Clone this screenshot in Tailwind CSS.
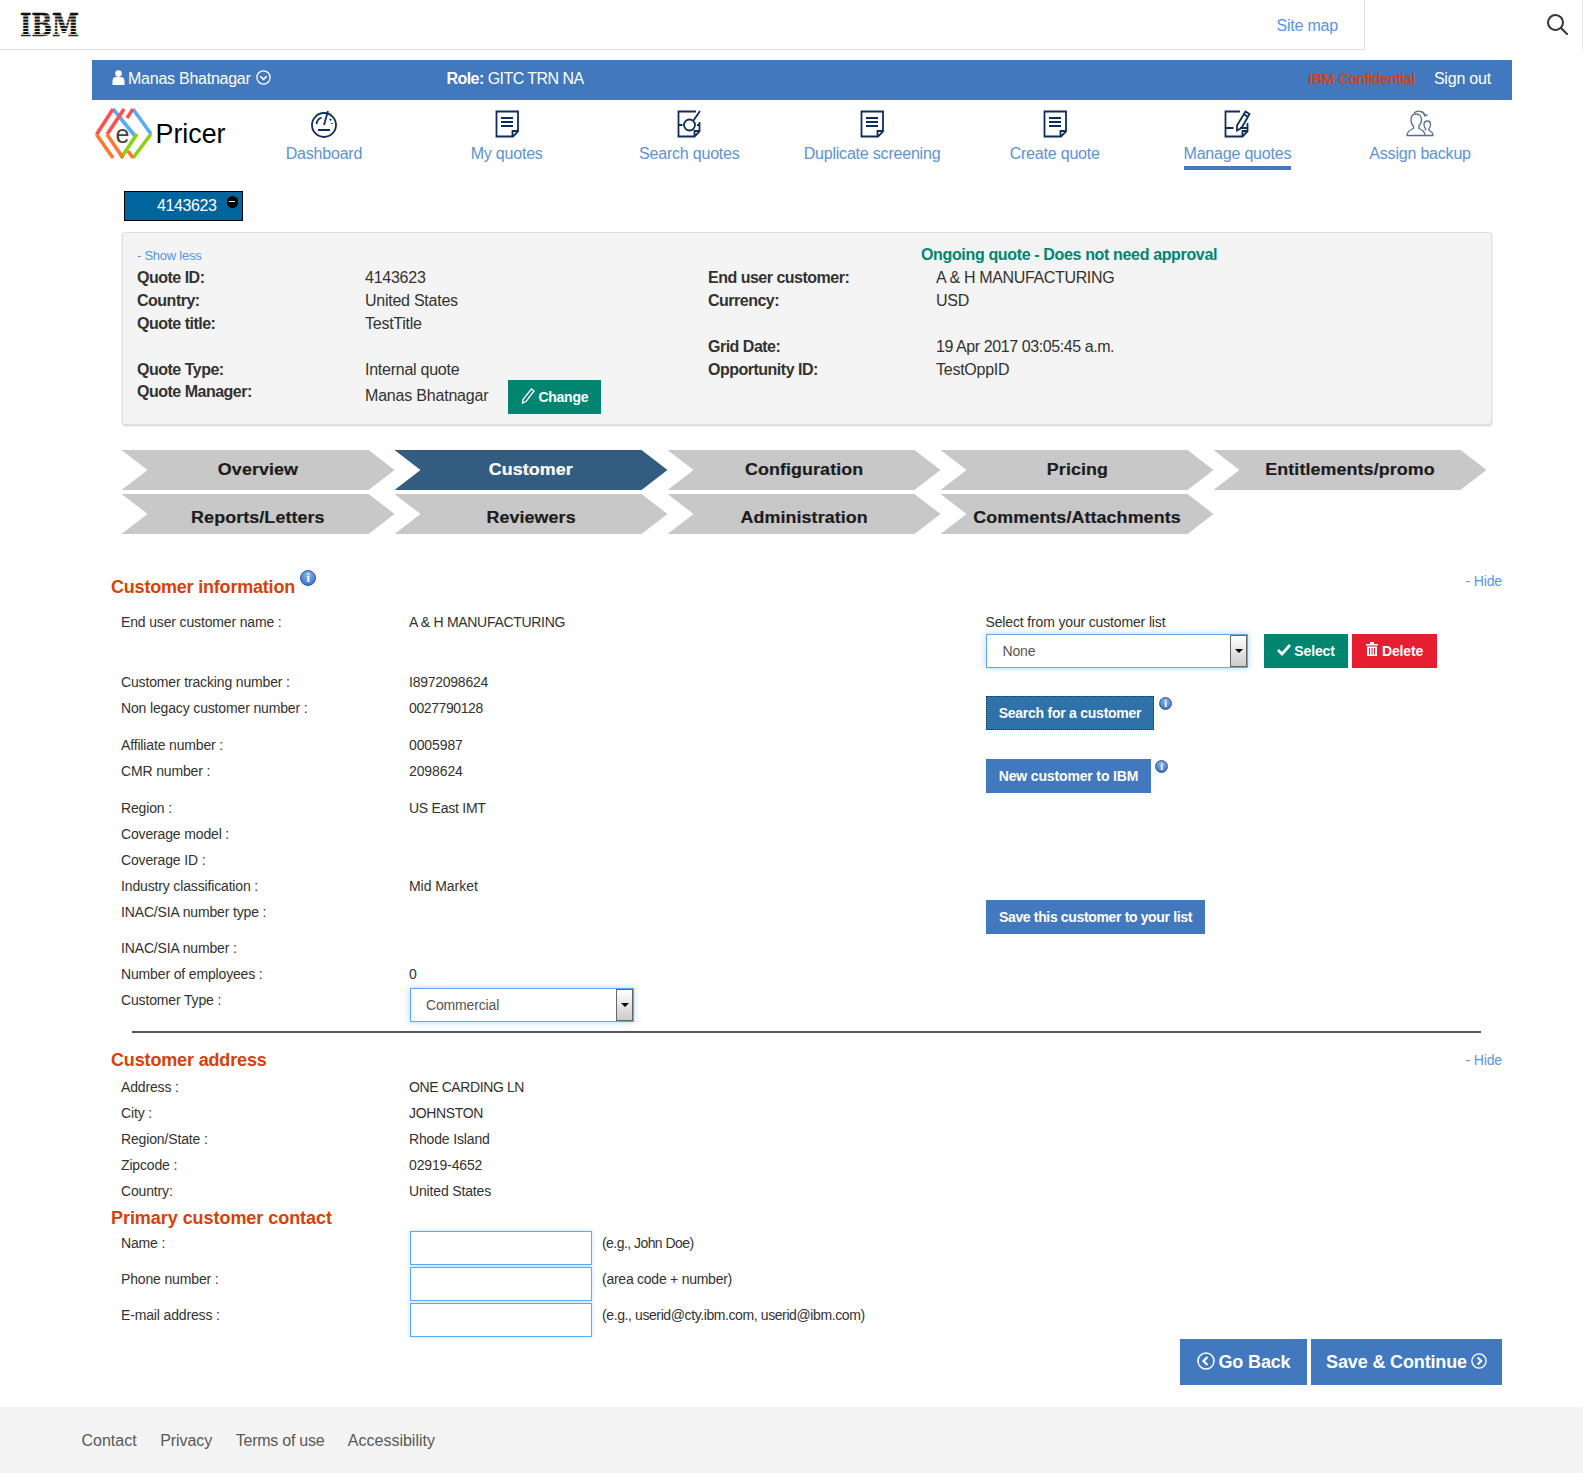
<!DOCTYPE html>
<html lang="en">
<head>
  <meta charset="UTF-8">
  <title>ePricer - Customer</title>
  <script src="https://cdn.jsdelivr.net/npm/@tailwindcss/browser@4"></script>
</head>
<body class="bg-white font-['Liberation_Sans',sans-serif] text-[#323232] w-[1583px] overflow-x-hidden">

  <!-- Top header -->
  <header class="flex h-[50px]">
    <div class="w-[1365px] h-[50px] border-r border-b border-[#e0e0e0] flex items-center justify-between pl-[20px] pr-[26px]">
      <svg class="w-[60px] h-[30px] overflow-visible" viewBox="0 0 60 30">
        <text x="0" y="20" font-family="DejaVu Serif" font-weight="700" font-size="24" textLength="59" lengthAdjust="spacingAndGlyphs" transform="scale(1 1.3)" fill="#111" stroke="#111" stroke-width="0.5">IBM</text>
        <path d="M0 6h60M0 9.100h60M0 12.200h60M0 15.300h60M0 18.400h60M0 21.500h60M0 24.600h60" stroke="#fff" stroke-width="0.9"/>
      </svg>
      <a class="text-[16px] text-[#5596e6] tracking-[-0.2px] mt-[3px]">Site map</a>
    </div>
    <div class="flex-1 flex justify-end items-start border-r border-[#e8e8e8]">
      <svg class="w-[22px] h-[22px] mt-[13px] mr-[14px]" viewBox="0 0 22 22" fill="none" stroke="#333" stroke-width="2"><circle cx="9.500" cy="9.500" r="7.500"/><path d="M15 15l6 6" stroke-linecap="round"/></svg>
    </div>
  </header>

  <!-- User bar -->
  <div class="ml-[92px] mt-[10px] w-[1420px] h-[40px] pb-[2px] bg-[#4178be] text-white text-[16px] flex items-center tracking-[-0.2px]">
    <div class="w-[354.500px] pl-[20px] flex items-center">
      <svg class="w-[13px] h-[15px] mr-[3px] -mt-[4px]" viewBox="0 0 13 15" fill="#fff"><circle cx="6.500" cy="3.600" r="3.300"/><path d="M0.500 15V10.500C0.500 8 2.500 7 4 7h5c1.500 0 3.500 1 3.500 3.500V15z"/></svg>
      <span class="tracking-[-0.25px]">Manas Bhatnagar</span>
      <svg class="w-[15px] h-[15px] ml-[5px] -mt-[4px]" viewBox="0 0 15 15" fill="none" stroke="#fff" stroke-width="1.300"><circle cx="7.500" cy="7.500" r="6.600"/><path d="M4.300 6.200l3.200 3.200 3.200-3.200" stroke-width="1.600"/></svg>
    </div>
    <div class="flex-1 tracking-[-0.55px]"><b>Role:</b> GITC TRN NA</div>
    <span class="text-[15px] text-[#d74108] [-webkit-text-stroke:0.4px_#d74108]">IBM Confidential</span>
    <a class="ml-[19px] mr-[21px]">Sign out</a>
  </div>

  <!-- Logo and navigation -->
  <nav class="ml-[90px] h-[91px] flex items-start">
    <svg class="w-[150px] h-[64px] mt-[4px] shrink-0" viewBox="0 0 150 64" fill="none" stroke-width="3.600">
      <path d="M23 5L45 32M43 5L61 30" stroke="#5aaafa"/>
      <path d="M61 30L43 54M47 30L31 54" stroke="#8cd211"/>
      <path d="M23 5L6.500 30.500M34 5L17 30.500M43 5L37 14" stroke="#ff5050"/>
      <path d="M6.500 30.500L23 54M17 30.500L33 54M38 47L43 54" stroke="#ff7832"/>
      <text x="25.500" y="39" font-size="25" stroke="none" fill="#444">e</text>
      <text x="65.500" y="39" font-size="28.500" stroke="none" fill="#000" textLength="70" lengthAdjust="spacingAndGlyphs">Pricer</text>
    </svg>
    <div class="ml-[-7.400px] grid grid-cols-[repeat(7,182.700px)] text-[16px] text-[#5a93d8] text-center tracking-[-0.2px]">
      <a class="flex flex-col items-center pt-[10px]">
        <svg class="w-[28px] h-[28px]" viewBox="0 0 28 28" fill="none" stroke="#0f2d5c" stroke-width="1.800"><circle cx="14" cy="15" r="12"/><path d="M14 15L18 1M8 20h12M6.500 14a8 8 0 0 1 5-6.500M20 9l1 1.500M22 13v1" /></svg>
        <span class="mt-[6px] leading-[20px]">Dashboard</span>
      </a>
      <a class="flex flex-col items-center pt-[10px]">
        <svg class="w-[28px] h-[28px]" viewBox="0 0 28 28" fill="none" stroke="#0f2d5c" stroke-width="1.800"><path d="M3.500 1.500h21.500v20l-5 5H3.500zM25 21h-5.500v5.500M8 8h12M8 12h12M8 16h12"/></svg>
        <span class="mt-[6px] leading-[20px]">My quotes</span>
      </a>
      <a class="flex flex-col items-center pt-[10px]">
        <svg class="w-[28px] h-[28px]" viewBox="0 0 28 28" fill="none" stroke="#0f2d5c" stroke-width="1.800"><path d="M21 1.500H3.500v25h16l5-5V12M24.500 21h-5v5.500M3.500 15h4M22 15h2.500"/><circle cx="14.500" cy="15" r="5.500"/><path d="M18.500 10.500L25 1"/></svg>
        <span class="mt-[6px] leading-[20px]">Search quotes</span>
      </a>
      <a class="flex flex-col items-center pt-[10px]">
        <svg class="w-[28px] h-[28px]" viewBox="0 0 28 28" fill="none" stroke="#0f2d5c" stroke-width="1.800"><path d="M3.500 1.500h21.500v20l-5 5H3.500zM25 21h-5.500v5.500M8 8h12M8 12h12M8 16h12"/></svg>
        <span class="mt-[6px] leading-[20px]">Duplicate screening</span>
      </a>
      <a class="flex flex-col items-center pt-[10px]">
        <svg class="w-[28px] h-[28px]" viewBox="0 0 28 28" fill="none" stroke="#0f2d5c" stroke-width="1.800"><path d="M3.500 1.500h21.500v20l-5 5H3.500zM25 21h-5.500v5.500M8 8h12M8 12h12M8 16h12"/></svg>
        <span class="mt-[6px] leading-[20px]">Create quote</span>
      </a>
      <a class="flex flex-col items-center pt-[10px]">
        <svg class="w-[28px] h-[28px]" viewBox="0 0 28 28" fill="none" stroke="#0f2d5c" stroke-width="1.800"><path d="M17 1.500H2.500v25h17l5-5V13M24.500 21h-5v5.500M2.500 18h8M17 18h7.500"/><path d="M22.500 1.500l4 2.500-8 14-4.500 2.500 0-5z"/><path d="M20.500 4l4 2.500"/></svg>
        <span class="mt-[6px] leading-[20px] border-b-4 border-[#4178be] pb-[2px]">Manage quotes</span>
      </a>
      <a class="flex flex-col items-center pt-[10px]">
        <svg class="w-[28px] h-[28px]" viewBox="0 0 28 28" fill="none" stroke="#5a6e8c" stroke-width="1.300"><path d="M1 25.500h18c0-4-2-5.500-6-7v-3c2-1.500 2.500-4 2.500-6 0-3-2-5.500-5.500-5.500S5 7 5 10c0 2 .5 4.500 2.500 6v2.500c-4 1.500-6.500 3-6.500 7z"/><path d="M19 25.500h8c0-3-1.500-4-4-5v-2c1.500-1 1.500-3 1.500-4 0-2-1-3.500-3-3.500s-3.500 1.500-3.500 3.500c0 1 .5 3 1.500 4v2"/><path d="M8 3.500c1-2 4-3 6.500-2 2.500.5 4 2 4.500 4M17.500 3.500l1.500 2.500 2.500-1.500"/></svg>
        <span class="mt-[6px] leading-[20px]">Assign backup</span>
      </a>
    </div>
  </nav>

  <!-- Quote tab -->
  <div class="ml-[124px] w-[119px] h-[30px] bg-[#00649d] border border-black text-white text-[16px] flex items-center pl-[32px] tracking-[-0.4px]">
    <span>4143623</span>
    <span class="ml-[10px] -mt-[9px] w-[11px] h-[12px] rounded-full bg-black flex items-center justify-center"><span class="w-[6px] h-[1.500px] bg-white"></span></span>
  </div>

  <!-- Quote summary -->
  <section class="ml-[122px] mt-[11px] w-[1370px] h-[193px] bg-[#f4f4f4] border border-[#dfdfdf] rounded-[3px] shadow-[0_1px_2px_rgba(0,0,0,0.2)] pl-[14px] pr-[15px] pt-[12px] text-[16px] tracking-[-0.25px] relative">
    <div class="h-[21px] text-[13px] text-[#5596e6] leading-[22px]">- Show less</div>
    <div class="grid grid-cols-[228px_343px_228px_1fr] auto-rows-[23px] leading-[24px] [&>b]:tracking-[-0.5px]">
      <b>Quote ID:</b><span>4143623</span><b>End user customer:</b><span class="tracking-[-0.35px]">A &amp; H MANUFACTURING</span>
      <b>Country:</b><span>United States</span><b>Currency:</b><span>USD</span>
      <b>Quote title:</b><span>TestTitle</span><span></span><span></span>
      <span></span><span></span><b>Grid Date:</b><span class="tracking-[-0.42px]">19 Apr 2017 03:05:45 a.m.</span>
      <b>Quote Type:</b><span>Internal quote</span><b>Opportunity ID:</b><span>TestOppID</span>
      <b class="-mt-[1px]">Quote Manager:</b>
      <div class="flex items-start col-span-3">
        <span class="mt-[3px] tracking-[-0.2px]">Manas Bhatnagar</span>
        <span class="ml-[20px] -mt-[1px] w-[93px] h-[34px] bg-[#008571] text-white text-[14px] font-bold flex items-center justify-center">
          <svg class="w-[14px] h-[16px] mr-[3px] -mt-[3px]" viewBox="0 0 14 16" fill="none" stroke="#fff" stroke-width="1.300"><path d="M10.500 1l2.500 2-8 10.500-3.500 1.500.500-3.500z"/></svg>Change
        </span>
      </div>
    </div>
    <b class="absolute left-[798px] top-[12px] text-[#008571] leading-[20px] tracking-[-0.35px]">Ongoing quote - Does not need approval</b>
  </section>

  <!-- Steps -->
  <div class="ml-[121.500px] mt-[25px] grid grid-cols-[repeat(5,273px)] gap-y-[4px] text-[16px] font-bold text-[#1c1c1c] tracking-[0.1px] [-webkit-text-stroke:0.2px]">
    <div class="h-[40px] bg-[#c8c8c8] [clip-path:polygon(0_0,247px_0,273px_50%,247px_100%,0_100%,26px_50%)] flex items-center justify-center"><span class="scale-x-[1.115]">Overview</span></div>
    <div class="h-[40px] bg-[#325c80] text-white [clip-path:polygon(0_0,247px_0,273px_50%,247px_100%,0_100%,26px_50%)] flex items-center justify-center"><span class="scale-x-[1.115]">Customer</span></div>
    <div class="h-[40px] bg-[#c8c8c8] [clip-path:polygon(0_0,247px_0,273px_50%,247px_100%,0_100%,26px_50%)] flex items-center justify-center"><span class="scale-x-[1.115]">Configuration</span></div>
    <div class="h-[40px] bg-[#c8c8c8] [clip-path:polygon(0_0,247px_0,273px_50%,247px_100%,0_100%,26px_50%)] flex items-center justify-center"><span class="scale-x-[1.115]">Pricing</span></div>
    <div class="h-[40px] bg-[#c8c8c8] [clip-path:polygon(0_0,247px_0,273px_50%,247px_100%,0_100%,26px_50%)] flex items-center justify-center"><span class="scale-x-[1.115]">Entitlements/promo</span></div>
    <div class="h-[40px] pt-[8px] bg-[#c8c8c8] [clip-path:polygon(0_0,247px_0,273px_50%,247px_100%,0_100%,26px_50%)] flex items-center justify-center"><span class="scale-x-[1.115]">Reports/Letters</span></div>
    <div class="h-[40px] pt-[8px] bg-[#c8c8c8] [clip-path:polygon(0_0,247px_0,273px_50%,247px_100%,0_100%,26px_50%)] flex items-center justify-center"><span class="scale-x-[1.115]">Reviewers</span></div>
    <div class="h-[40px] pt-[8px] bg-[#c8c8c8] [clip-path:polygon(0_0,247px_0,273px_50%,247px_100%,0_100%,26px_50%)] flex items-center justify-center"><span class="scale-x-[1.115]">Administration</span></div>
    <div class="h-[40px] pt-[8px] bg-[#c8c8c8] [clip-path:polygon(0_0,247px_0,273px_50%,247px_100%,0_100%,26px_50%)] flex items-center justify-center"><span class="scale-x-[1.115]">Comments/Attachments</span></div>
  </div>

  <!-- Customer information -->
  <main class="ml-[111px] mt-[40px] w-[1391px] text-[14px] tracking-[-0.15px]">
    <div class="h-[26px] flex items-center justify-between">
      <h2 class="text-[18px] font-bold text-[#d74108] tracking-[-0.2px] flex items-start">Customer information
        <span class="ml-[5px] -mt-[4px] w-[16px] h-[16px] rounded-full bg-[radial-gradient(circle_at_50%_30%,#8db8f0,#2a62b8)] border border-[#2c5a9e] text-white text-[12px] font-bold leading-[14px] text-center font-['Liberation_Serif',serif]">i</span>
      </h2>
      <a class="text-[#5596e6] -mt-[12px]">- Hide</a>
    </div>

    <div class="grid grid-cols-[875px_1fr] mt-[9px]">
      <div>
        <div class="flex h-[26px] pl-[10px] leading-[26px]"><span class="w-[288px]">End user customer name :</span><span class="tracking-[-0.3px]">A &amp; H MANUFACTURING</span></div>
        <div class="flex h-[26px] pl-[10px] leading-[26px] mt-[34px]"><span class="w-[288px]">Customer tracking number :</span><span class="tracking-[-0.25px]">I8972098624</span></div>
        <div class="flex h-[26px] pl-[10px] leading-[26px]"><span class="w-[288px]">Non legacy customer number :</span><span class="tracking-[-0.4px]">0027790128</span></div>
        <div class="flex h-[26px] pl-[10px] leading-[26px] mt-[11px]"><span class="w-[288px]">Affiliate number :</span><span class="tracking-[-0.1px]">0005987</span></div>
        <div class="flex h-[26px] pl-[10px] leading-[26px]"><span class="w-[288px]">CMR number :</span><span class="tracking-[-0.1px]">2098624</span></div>
        <div class="flex h-[26px] pl-[10px] leading-[26px] mt-[11px]"><span class="w-[288px]">Region :</span><span class="tracking-[-0.25px]">US East IMT</span></div>
        <div class="flex h-[26px] pl-[10px] leading-[26px]"><span class="w-[288px]">Coverage model :</span></div>
        <div class="flex h-[26px] pl-[10px] leading-[26px]"><span class="w-[288px]">Coverage ID :</span></div>
        <div class="flex h-[26px] pl-[10px] leading-[26px]"><span class="w-[288px]">Industry classification :</span><span class="tracking-[-0.05px]">Mid Market</span></div>
        <div class="flex h-[26px] pl-[10px] leading-[26px]"><span class="w-[288px]">INAC/SIA number type :</span></div>
        <div class="flex h-[26px] pl-[10px] leading-[26px] mt-[10px]"><span class="w-[288px]">INAC/SIA number :</span></div>
        <div class="flex h-[26px] pl-[10px] leading-[26px]"><span class="w-[288px]">Number of employees :</span><span>0</span></div>
        <div class="flex h-[35px] pl-[10px] leading-[26px]"><span class="w-[288px]">Customer Type :</span>
          <div class="ml-[1px] mt-[1px] w-[224px] h-[34px] border border-[#5aaafa] shadow-[0_0_6px_rgba(90,170,250,0.5)] flex justify-between items-stretch">
            <span class="pl-[15px] leading-[32px] text-[#555]">Commercial</span>
            <span class="w-[17px] m-[0px] border border-[#666] bg-gradient-to-b from-white to-[#ccc] flex items-center justify-center"><span class="border-x-[4px] border-x-transparent border-t-[4px] border-t-black"></span></span>
          </div>
        </div>
      </div>

      <div class="flex flex-col items-start">
        <div class="h-[25px] leading-[26px] -ml-[0.500px]">Select from your customer list</div>
        <div class="flex">
          <div class="w-[262px] h-[34px] border border-[#5aaafa] shadow-[0_0_6px_rgba(90,170,250,0.5)] flex justify-between items-stretch">
            <span class="pl-[15.500px] leading-[32px] text-[#555]">None</span>
            <span class="w-[17px] border border-[#666] bg-gradient-to-b from-white to-[#ccc] flex items-center justify-center"><span class="border-x-[4px] border-x-transparent border-t-[4px] border-t-black"></span></span>
          </div>
          <span class="ml-[16px] w-[84px] h-[34px] bg-[#008571] text-white font-bold flex items-center justify-center">
            <svg class="w-[14px] h-[12px] mr-[3px] -mt-[3px]" viewBox="0 0 14 12" fill="none" stroke="#fff" stroke-width="2.800"><path d="M1 6l4 4 8-9"/></svg>Select
          </span>
          <span class="ml-[4px] w-[85px] h-[34px] bg-[#e71d32] text-white font-bold flex items-center justify-center">
            <svg class="w-[12px] h-[14px] mr-[4px] -mt-[4px]" viewBox="0 0 12 14" fill="#fff"><path d="M0 2h12v1.500H0zM4 0h4v2H4zM1 4.500h10V14H1zM3 6v6.500h1V6zM5.500 6v6.500h1V6zM8 6v6.500h1V6z" fill-rule="evenodd"/></svg>Delete
          </span>
        </div>
        <div class="flex items-start mt-[28px]">
          <span class="w-[168px] h-[34px] bg-[#2e72a9] border border-dotted border-[#1a3350] text-white font-bold tracking-[-0.25px] flex items-center justify-center">Search for a customer</span>
          <span class="ml-[5px] mt-[1px] w-[13px] h-[13px] rounded-full bg-[radial-gradient(circle_at_50%_30%,#8db8f0,#2a62b8)] border border-[#2c5a9e] text-white text-[10px] font-bold leading-[11px] text-center font-['Liberation_Serif',serif]">i</span>
        </div>
        <div class="flex items-start mt-[29px]">
          <span class="w-[165px] h-[34px] bg-[#4178be] text-white font-bold flex items-center justify-center">New customer to IBM</span>
          <span class="ml-[4px] mt-[1px] w-[13px] h-[13px] rounded-full bg-[radial-gradient(circle_at_50%_30%,#8db8f0,#2a62b8)] border border-[#2c5a9e] text-white text-[10px] font-bold leading-[11px] text-center font-['Liberation_Serif',serif]">i</span>
        </div>
        <span class="mt-[107px] w-[219px] h-[34px] bg-[#4178be] text-white font-bold tracking-[-0.35px] flex items-center justify-center">Save this customer to your list</span>
      </div>
    </div>

    <div class="ml-[21px] mt-[9px] w-[1349px] h-[2px] bg-[#555]"></div>

    <!-- Customer address -->
    <div class="h-[26px] mt-[14px] flex items-center justify-between">
      <h2 class="text-[18px] font-bold text-[#d74108] tracking-[-0.15px]">Customer address</h2>
      <a class="text-[#5596e6]">- Hide</a>
    </div>
    <div class="flex h-[26px] pl-[10px] leading-[26px] mt-[1px]"><span class="w-[288px]">Address :</span><span class="tracking-[-0.4px]">ONE CARDING LN</span></div>
    <div class="flex h-[26px] pl-[10px] leading-[26px]"><span class="w-[288px]">City :</span><span class="tracking-[-0.35px]">JOHNSTON</span></div>
    <div class="flex h-[26px] pl-[10px] leading-[26px]"><span class="w-[288px]">Region/State :</span><span class="tracking-[-0.15px]">Rhode Island</span></div>
    <div class="flex h-[26px] pl-[10px] leading-[26px]"><span class="w-[288px]">Zipcode :</span><span class="tracking-[-0.15px]">02919-4652</span></div>
    <div class="flex h-[26px] pl-[10px] leading-[26px]"><span class="w-[288px]">Country:</span><span class="tracking-[-0.15px]">United States</span></div>

    <!-- Primary customer contact -->
    <h2 class="h-[26px] mt-[1px] leading-[26px] text-[18px] font-bold text-[#d74108] tracking-[-0.05px]">Primary customer contact</h2>
    <div class="flex h-[36px] pl-[10px] leading-[24px]"><span class="w-[288px]">Name :</span><span class="ml-[1px] w-[182px] h-[34px] border border-[#5aaafa] shadow-[0_0_4px_rgba(90,170,250,0.4)]"></span><span class="ml-[10px] tracking-[-0.55px]">(e.g., John Doe)</span></div>
    <div class="flex h-[36px] pl-[10px] leading-[24px]"><span class="w-[288px]">Phone number :</span><span class="ml-[1px] w-[182px] h-[34px] border border-[#5aaafa] shadow-[0_0_4px_rgba(90,170,250,0.4)]"></span><span class="ml-[10px] tracking-[-0.25px]">(area code + number)</span></div>
    <div class="flex h-[36px] pl-[10px] leading-[24px]"><span class="w-[288px]">E-mail address :</span><span class="ml-[1px] w-[182px] h-[34px] border border-[#5aaafa] shadow-[0_0_4px_rgba(90,170,250,0.4)]"></span><span class="ml-[10px] tracking-[-0.4px]">(e.g., userid@cty.ibm.com, userid@ibm.com)</span></div>

    <div class="flex justify-end gap-[4px] text-white text-[18px] font-bold tracking-[-0.15px]">
      <a class="w-[127px] h-[46px] bg-[#4178be] flex items-center justify-center">
        <svg class="w-[18px] h-[18px] mr-[4px] -mt-[3px]" viewBox="0 0 18 18" fill="none" stroke="#fff" stroke-width="1.500"><circle cx="9" cy="9" r="8"/><path d="M10.500 5L6.500 9l4 4" stroke-width="2.200"/></svg>Go Back
      </a>
      <a class="w-[191px] h-[46px] bg-[#4178be] flex items-center justify-center">
        Save &amp; Continue
        <svg class="w-[16px] h-[16px] ml-[4px] -mt-[3px]" viewBox="0 0 18 18" fill="none" stroke="#fff" stroke-width="1.500"><circle cx="9" cy="9" r="8"/><path d="M7.500 5l4 4-4 4" stroke-width="2.200"/></svg>
      </a>
    </div>
  </main>

  <!-- Footer -->
  <footer class="mt-[22px] h-[66px] pt-[1px] bg-[#f4f4f4] flex items-center pl-[81.500px] gap-[23.500px] text-[16px] text-[#595959]">
    <a>Contact</a><a class="-tracking-[0.05px]">Privacy</a><a class="tracking-[-0.25px]">Terms of use</a><a>Accessibility</a>
  </footer>
</body>
</html>
